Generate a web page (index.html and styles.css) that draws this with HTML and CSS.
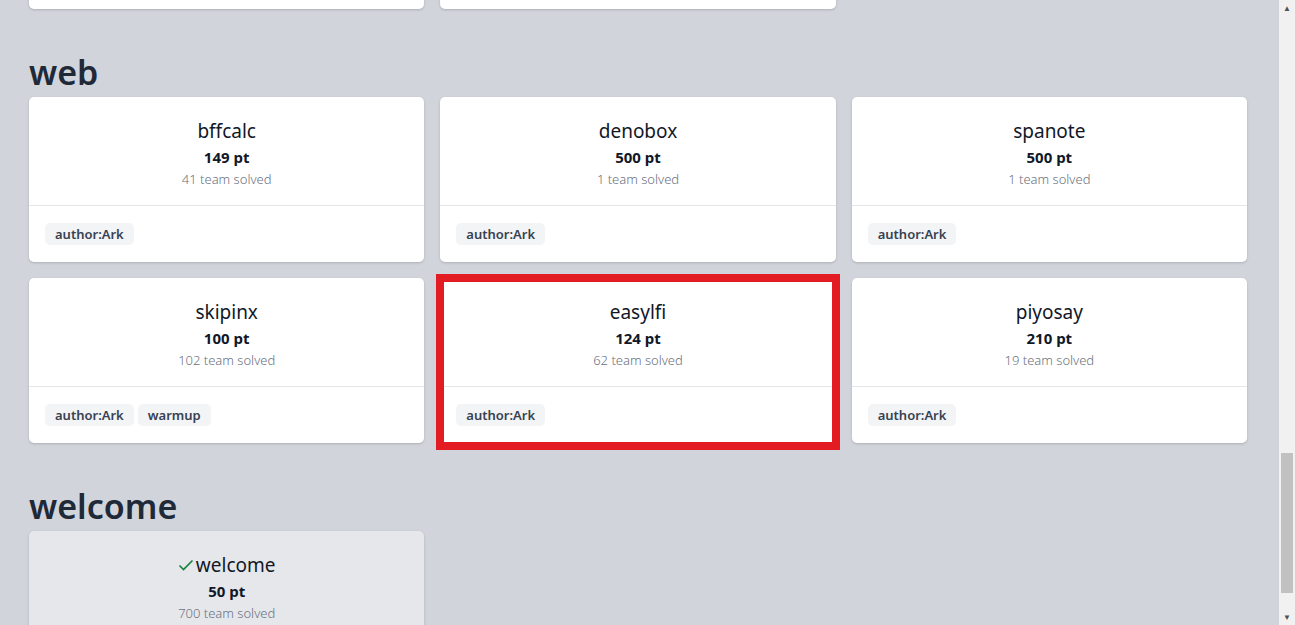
FILE: index.html
```html
<!DOCTYPE html>
<html lang="en">
<head>
  <meta charset="UTF-8" />
  <title>Challenges</title>
  <link rel="stylesheet" href="styles.css">
</head>
<body>
  <main class="board">
    <section class="category category-clipped">
      <div class="grid">
        <div class="card card-blank"></div>
        <div class="card card-blank"></div>
      </div>
    </section>

    <section class="category">
      <h2>web</h2>
      <div class="grid">
        <div class="card">
          <div class="card-body">
            <div class="name">bffcalc</div>
            <div class="points">149 pt</div>
            <div class="solves">41 team solved</div>
          </div>
          <div class="tags"><span class="tag">author:Ark</span></div>
        </div>
        <div class="card">
          <div class="card-body">
            <div class="name">denobox</div>
            <div class="points">500 pt</div>
            <div class="solves">1 team solved</div>
          </div>
          <div class="tags"><span class="tag">author:Ark</span></div>
        </div>
        <div class="card">
          <div class="card-body">
            <div class="name">spanote</div>
            <div class="points">500 pt</div>
            <div class="solves">1 team solved</div>
          </div>
          <div class="tags"><span class="tag">author:Ark</span></div>
        </div>
        <div class="card">
          <div class="card-body">
            <div class="name">skipinx</div>
            <div class="points">100 pt</div>
            <div class="solves">102 team solved</div>
          </div>
          <div class="tags"><span class="tag">author:Ark</span><span class="tag">warmup</span></div>
        </div>
        <div class="card card-marked">
          <div class="card-body">
            <div class="name">easylfi</div>
            <div class="points">124 pt</div>
            <div class="solves">62 team solved</div>
          </div>
          <div class="tags"><span class="tag">author:Ark</span></div>
          <div class="mark"></div>
        </div>
        <div class="card">
          <div class="card-body">
            <div class="name">piyosay</div>
            <div class="points">210 pt</div>
            <div class="solves">19 team solved</div>
          </div>
          <div class="tags"><span class="tag">author:Ark</span></div>
        </div>
      </div>
    </section>

    <section class="category">
      <h2>welcome</h2>
      <div class="grid">
        <div class="card card-solved">
          <div class="card-body">
            <div class="name">
              <svg class="check" viewBox="0 0 16 16" width="16" height="16"><path d="M1.5 8.5l4 4 9-9" fill="none" stroke="#15803d" stroke-width="1.6"/></svg>welcome
            </div>
            <div class="points">50 pt</div>
            <div class="solves">700 team solved</div>
          </div>
        </div>
      </div>
    </section>
  </main>

  <aside class="scrollbar">
    <div class="arrow">&#9650;</div>
    <div class="track"><div class="thumb"></div></div>
    <div class="arrow">&#9660;</div>
  </aside>
</body>
</html>
```

FILE: styles.css
```css
html, body {
  height: 100%;
}
body {
  margin: 0;
  display: flex;
  overflow: hidden;
  background: #d1d5db;
  color: #1f2937;
  font-family: 'Noto Sans', 'Segoe UI', sans-serif;
}
.board {
  flex: 1;
  padding: 0 32px 0 29px;
}
.category h2 {
  margin: 38px 0 0;
  font-size: 34px;
  line-height: 50px;
  font-weight: 600;
  color: #1f2937;
}
.category-clipped {
  margin-top: -156px;
}
.grid {
  display: grid;
  grid-template-columns: repeat(3, 1fr);
  gap: 16px;
  width: 1218px;
}
.card {
  position: relative;
  background: #fff;
  border-radius: 5px;
  box-shadow: 0 1px 3px rgba(0, 0, 0, 0.12), 0 1px 2px rgba(0, 0, 0, 0.06);
  text-align: center;
}
.card-blank {
  height: 165px;
}
.card-solved {
  background: #e5e7eb;
  height: 165px;
}
.card-body {
  padding: 20px 16px 16px;
  border-bottom: 1px solid #e5e7eb;
}
.name {
  font-size: 19px;
  line-height: 28px;
  color: #111827;
}
.check {
  vertical-align: -1px;
  margin-right: 2px;
}
.points {
  font-size: 15px;
  line-height: 24px;
  font-weight: 700;
  color: #111827;
}
.solves {
  font-size: 13px;
  line-height: 20px;
  font-weight: 300;
  color: #6b7280;
}
.tags {
  display: flex;
  gap: 4px;
  padding: 17px 16px;
}
.tag {
  background: #f3f4f6;
  color: #374151;
  font-size: 13px;
  font-weight: 600;
  line-height: 22px;
  padding: 0 10px;
  border-radius: 5px;
}
.mark {
  position: absolute;
  top: -4px;
  left: -4px;
  right: -4px;
  bottom: -7px;
  border: 8px solid #e31b23;
}
.scrollbar {
  width: 16px;
  display: flex;
  flex-direction: column;
  background: #f1f1f1;
}
.arrow {
  height: 16px;
  font-size: 8px;
  line-height: 16px;
  text-align: center;
  color: #505050;
}
.track {
  flex: 1;
  padding: 437px 2px 0;
}
.thumb {
  height: 140px;
  background: #c1c1c1;
}
```
